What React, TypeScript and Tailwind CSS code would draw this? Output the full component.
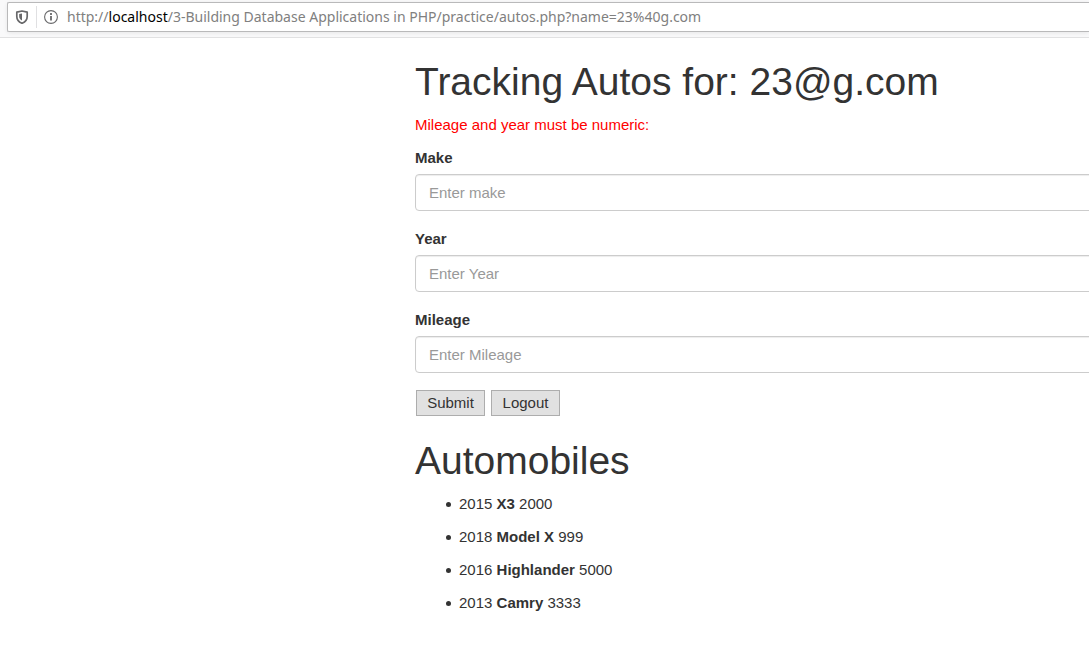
import type { ReactNode } from "react";

const fields = [
  { id: "make", label: "Make", placeholder: "Enter make" },
  { id: "year", label: "Year", placeholder: "Enter Year" },
  { id: "mileage", label: "Mileage", placeholder: "Enter Mileage" },
];

const autos = [
  { year: 2015, make: "X3", mileage: 2000 },
  { year: 2018, make: "Model X", mileage: 999 },
  { year: 2016, make: "Highlander", mileage: 5000 },
  { year: 2013, make: "Camry", mileage: 3333 },
];

function AddressBar() {
  return (
    <header className="flex h-[38px] items-start overflow-hidden border-b border-[#e1e1e2] bg-[#f9f9fa] pt-[2px] pl-[7px]">
      <div className="flex h-[30px] flex-1 items-center rounded-l-[2px] border border-r-0 border-[#b9b9ba] bg-white shadow-[0_1px_4px_rgba(0,0,0,0.08)]">
        <div className="flex h-[22px] w-[29px] items-center justify-center border-r border-[#e0e0e2]">
          <svg width="14" height="14" viewBox="0 0 14 14" fill="none" stroke="#68686a">
            <path d="M7 1 12.200 2.200V6.500C12.200 9.800 10.200 12 7 13.300 3.800 12 1.800 9.800 1.800 6.500V2.200Z" strokeWidth="1.700" strokeLinejoin="round" />
            <path d="M7 3.500V10.600C5.100 9.600 4.200 8.300 4.200 6.500V4.100Z" fill="#68686a" stroke="none" />
          </svg>
        </div>
        <svg className="ml-[7px]" width="14" height="14" viewBox="0 0 14 14" fill="none" stroke="#68686a">
          <circle cx="7" cy="7" r="6.400" strokeWidth="1.100" />
          <path d="M7 6v4.500M7 3v2" strokeWidth="1.800" />
        </svg>
        <span className="ml-[9px] font-['Noto_Sans',sans-serif] text-[14px] whitespace-nowrap text-[#808080]">
          http://<span className="text-black">localhost</span>/3-Building Database Applications in PHP/practice/autos.php?name=23%40g.com
        </span>
      </div>
    </header>
  );
}

function Heading({ children }: { children: ReactNode }) {
  return <h1 className="text-[39px] leading-[43px] font-medium">{children}</h1>;
}

export default function App() {
  return (
    <div className="min-h-screen overflow-x-hidden bg-white font-['Liberation_Sans',Arial,sans-serif] text-[15px] leading-[22px] text-[#333]">
      <AddressBar />
      <main className="pt-[22px] pl-[415px]">
        <Heading>Tracking Autos for: 23@g.com</Heading>
        <p className="mt-[11px] text-[#f00]">Mileage and year must be numeric:</p>
        <form className="mt-[11px]" onSubmit={(e) => e.preventDefault()}>
          <div className="-mr-4 flex flex-col gap-[17px]">
            {fields.map((f) => (
              <div key={f.id}>
                <label htmlFor={f.id} className="mb-[5px] block font-bold">{f.label}</label>
                <input
                  id={f.id}
                  placeholder={f.placeholder}
                  className="block h-[37px] w-full rounded border border-[#ccc] px-[13px] shadow-[inset_0_1px_1px_rgba(0,0,0,0.075)] placeholder:text-[#999]"
                />
              </div>
            ))}
          </div>
          <div className="mt-[17px] ml-px flex gap-[6px]">
            <button type="submit" className="h-[26px] w-[69px] border border-[#adadad] bg-[#e1e1e1] leading-6">Submit</button>
            <button type="button" className="h-[26px] w-[69px] border border-[#adadad] bg-[#e1e1e1] leading-6">Logout</button>
          </div>
        </form>
        <section className="mt-[23px]">
          <Heading>Automobiles</Heading>
          <ul className="mt-[11px] flex flex-col gap-[11px] pl-[31px]">
            {autos.map((a) => (
              <li key={a.make} className="flex items-center gap-2 before:size-[5px] before:rounded-full before:bg-[#333]">
                <span>
                  {a.year} <b>{a.make}</b> {a.mileage}
                </span>
              </li>
            ))}
          </ul>
        </section>
      </main>
    </div>
  );
}
